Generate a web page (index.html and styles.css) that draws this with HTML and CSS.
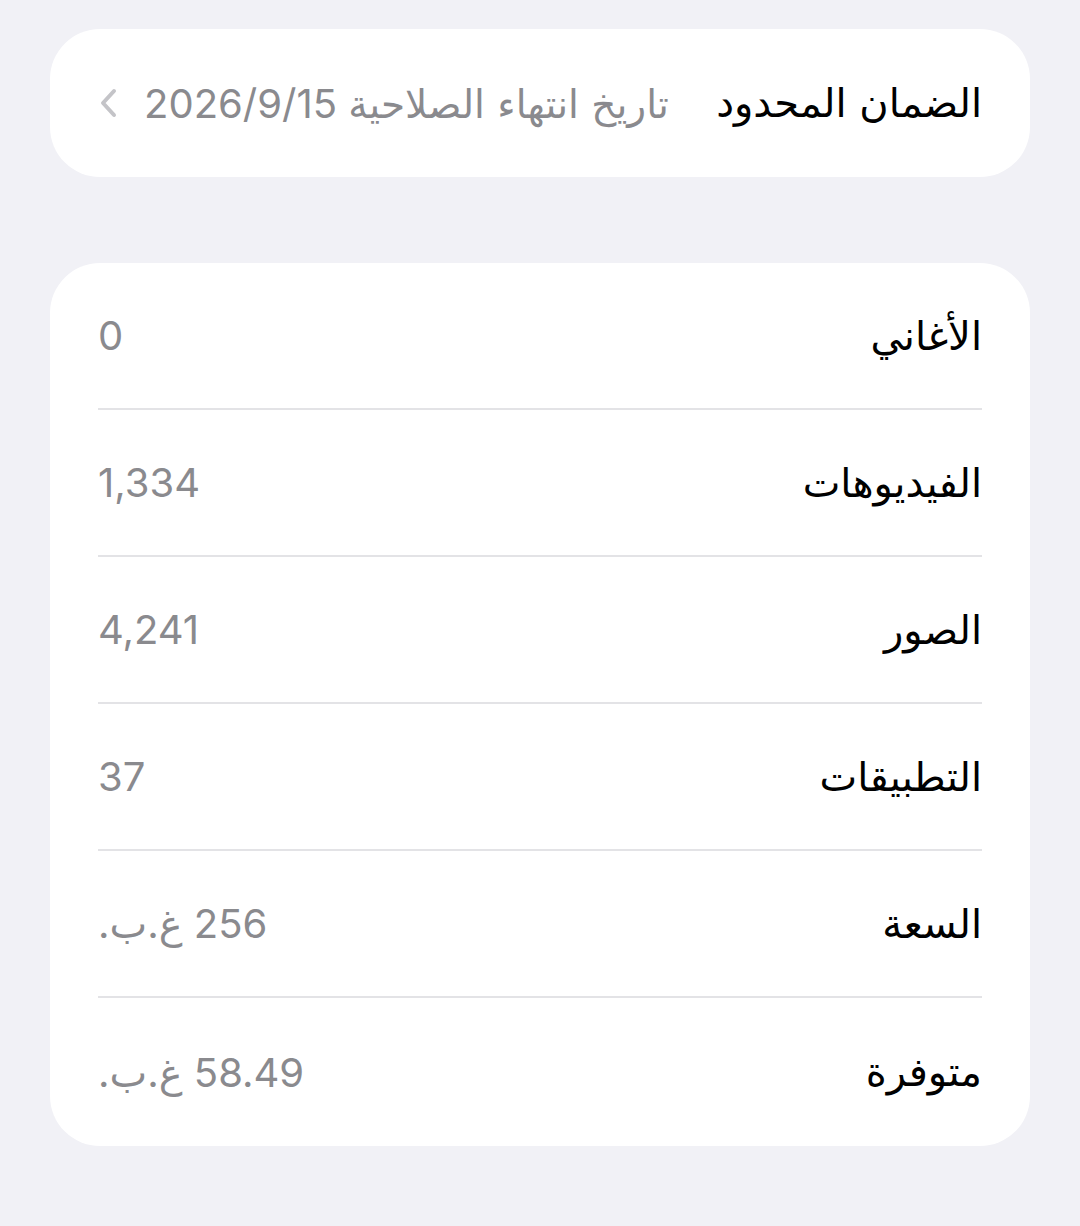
FILE: index.html
```html
<!DOCTYPE html>
<html lang="ar" dir="rtl">
<head>
<meta charset="utf-8">
<link rel="stylesheet" href="styles.css">
</head>
<body>
<div class="page">
  <div class="card">
    <div class="row single">
      <span class="label">الضمان المحدود</span>
      <span class="value link">
        <span class="text"><span class="ar">تاريخ انتهاء الصلاحية</span> <span class="num">2026/9/15</span></span>
        <svg class="chev" width="20" height="32" viewBox="0 0 20 32"><path d="M16 4 L5 16 L16 28" fill="none" stroke="#c4c4c8" stroke-width="4" stroke-linecap="round" stroke-linejoin="round"/></svg>
      </span>
    </div>
  </div>
  <div class="card">
    <div class="row"><div class="inner"><span class="label">الأغاني</span><span class="value">0</span></div></div>
    <div class="row"><div class="inner"><span class="label">الفيديوهات</span><span class="value">1,334</span></div></div>
    <div class="row"><div class="inner"><span class="label">الصور</span><span class="value">4,241</span></div></div>
    <div class="row"><div class="inner"><span class="label">التطبيقات</span><span class="value">37</span></div></div>
    <div class="row"><div class="inner"><span class="label">السعة</span><span class="value">256 غ.ب.</span></div></div>
    <div class="row"><div class="inner last"><span class="label">متوفرة</span><span class="value">58.49 غ.ب.</span></div></div>
  </div>
</div>
</body>
</html>
```

FILE: styles.css
```css
html, body {
  margin: 0;
  padding: 0;
  background: #f1f1f6;
}
body {
  font-family: Inter, "DejaVu Sans", sans-serif;
  width: 1080px;
  height: 1226px;
  overflow: hidden;
}
.page {
  padding: 29px 50px 0 50px;
  display: flex;
  flex-direction: column;
  gap: 86px;
}
.card {
  background: #ffffff;
  border-radius: 50px;
  overflow: hidden;
}
.row {
  padding: 0 48px;
}
.row.single {
  height: 148px;
  display: flex;
  align-items: center;
  justify-content: space-between;
}
.inner {
  height: 145px;
  display: flex;
  align-items: center;
  justify-content: space-between;
  border-bottom: 2px solid #e3e3e6;
}
.inner.last {
  border-bottom: none;
  height: 148px;
}
.label {
  font-size: 40px;
  color: #000000;
  font-family: "DejaVu Sans", sans-serif;
}
.value {
  font-size: 40px;
  color: #8a8a8e;
  font-family: Inter, "DejaVu Sans", sans-serif;
}
.value.link {
  display: flex;
  align-items: center;
  gap: 26px;
}
.value.link .ar {
  font-size: 39px;
  font-family: "DejaVu Sans", sans-serif;
}
.value.link .num {
  font-size: 40px;
}
.chev {
  display: block;
}
```
